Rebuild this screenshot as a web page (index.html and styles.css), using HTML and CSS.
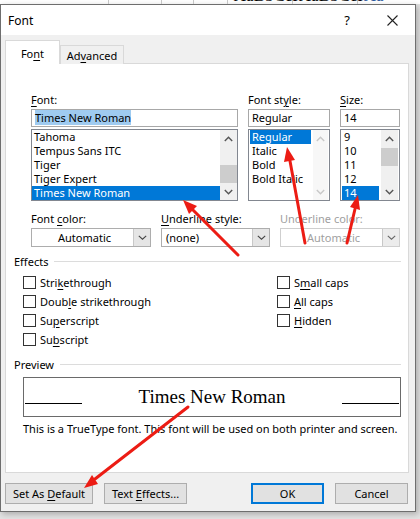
FILE: index.html
```html
<!DOCTYPE html>
<html lang="en">
<head>
    <meta charset="UTF-8">
    <title>Font</title>
    <link rel="stylesheet" href="styles.css">
</head>
<body>

    <div class="app-strip">
        <div class="cell" style="width: 112px"></div>
        <div class="cell" style="width: 54px"></div>
        <div class="cell" style="width: 32px"></div>
        <div class="cell" style="width: 34px"></div>
        <div class="cell cell-text"><span>AaBbCcI</span></div>
        <div class="cell cell-text"><span>AaBbCcI</span></div>
        <div class="cell cell-text blue"><span>Aa</span></div>
    </div>

    <div class="dialog">
        <div class="titlebar">
            <span class="title">Font</span>
            <span class="caption-btn">?</span>
            <span class="caption-btn close">
                <svg width="11" height="11" viewBox="0 0 11 11"><path d="M0.5 0.5 L10.5 10.5 M10.5 0.5 L0.5 10.5" stroke="#222" stroke-width="1.1" fill="none"/></svg>
            </span>
        </div>

        <div class="dialog-body">
            <div class="tabs">
                <div class="tab active">Fo<u>n</u>t</div>
                <div class="tab">Ad<u>v</u>anced</div>
            </div>

            <div class="panel">
                <div class="font-grid">
                    <div class="field">
                        <label><u>F</u>ont:</label>
                        <div class="textbox"><span class="sel-text">Times New Roman</span></div>
                        <div class="listbox">
                            <ul class="items">
                                <li>Tahoma</li>
                                <li>Tempus Sans ITC</li>
                                <li>Tiger</li>
                                <li>Tiger Expert</li>
                                <li class="selected">Times New Roman</li>
                            </ul>
                            <div class="scrollbar">
                                <div class="sb-btn"><svg width="9" height="6" viewBox="0 0 9 6"><path d="M0.8 5 L4.5 1.2 L8.2 5" stroke="#555" stroke-width="1.4" fill="none"/></svg></div>
                                <div class="sb-track"><div class="thumb thumb-low"></div></div>
                                <div class="sb-btn"><svg width="9" height="6" viewBox="0 0 9 6"><path d="M0.8 1 L4.5 4.8 L8.2 1" stroke="#555" stroke-width="1.4" fill="none"/></svg></div>
                            </div>
                        </div>
                    </div>

                    <div class="field">
                        <label>Font st<u>y</u>le:</label>
                        <div class="textbox">Regular</div>
                        <div class="listbox padded">
                            <ul class="items">
                                <li class="selected">Regular</li>
                                <li>Italic</li>
                                <li>Bold</li>
                                <li>Bold Italic</li>
                            </ul>
                            <div class="scrollbar disabled">
                                <div class="sb-btn"><svg width="9" height="6" viewBox="0 0 9 6"><path d="M0.8 5 L4.5 1.2 L8.2 5" stroke="#c8c8c8" stroke-width="1.4" fill="none"/></svg></div>
                                <div class="sb-track"></div>
                                <div class="sb-btn"><svg width="9" height="6" viewBox="0 0 9 6"><path d="M0.8 1 L4.5 4.8 L8.2 1" stroke="#c8c8c8" stroke-width="1.4" fill="none"/></svg></div>
                            </div>
                        </div>
                    </div>

                    <div class="field">
                        <label><u>S</u>ize:</label>
                        <div class="textbox">14</div>
                        <div class="listbox padded">
                            <ul class="items">
                                <li>9</li>
                                <li>10</li>
                                <li>11</li>
                                <li>12</li>
                                <li class="selected">14</li>
                            </ul>
                            <div class="scrollbar">
                                <div class="sb-btn"><svg width="9" height="6" viewBox="0 0 9 6"><path d="M0.8 5 L4.5 1.2 L8.2 5" stroke="#555" stroke-width="1.4" fill="none"/></svg></div>
                                <div class="sb-track"><div class="thumb"></div></div>
                                <div class="sb-btn"><svg width="9" height="6" viewBox="0 0 9 6"><path d="M0.8 1 L4.5 4.8 L8.2 1" stroke="#555" stroke-width="1.4" fill="none"/></svg></div>
                            </div>
                        </div>
                    </div>
                </div>

                <div class="combo-row">
                    <div class="combo-field wide">
                        <label>Font <u>c</u>olor:</label>
                        <div class="combo">
                            <span class="combo-value center">Automatic</span>
                            <span class="combo-btn"><svg width="9" height="5" viewBox="0 0 9 5"><path d="M0.8 0.8 L4.5 4.2 L8.2 0.8" stroke="#444" stroke-width="1.1" fill="none"/></svg></span>
                        </div>
                    </div>
                    <div class="combo-field narrow">
                        <label><u>U</u>nderline style:</label>
                        <div class="combo">
                            <span class="combo-value">(none)</span>
                            <span class="combo-btn"><svg width="9" height="5" viewBox="0 0 9 5"><path d="M0.8 0.8 L4.5 4.2 L8.2 0.8" stroke="#444" stroke-width="1.1" fill="none"/></svg></span>
                        </div>
                    </div>
                    <div class="combo-field wide disabled">
                        <label>Underline color:</label>
                        <div class="combo">
                            <span class="combo-value center">Automatic</span>
                            <span class="combo-btn"><svg width="9" height="5" viewBox="0 0 9 5"><path d="M0.8 0.8 L4.5 4.2 L8.2 0.8" stroke="#666" stroke-width="1.1" fill="none"/></svg></span>
                        </div>
                    </div>
                </div>

                <div class="group-title">Effects</div>
                <div class="effects">
                    <div class="effects-col">
                        <div class="check"><span class="box"></span><span>Stri<u>k</u>ethrough</span></div>
                        <div class="check"><span class="box"></span><span>Doub<u>l</u>e strikethrough</span></div>
                        <div class="check"><span class="box"></span><span>Su<u>p</u>erscript</span></div>
                        <div class="check"><span class="box"></span><span>Su<u>b</u>script</span></div>
                    </div>
                    <div class="effects-col">
                        <div class="check"><span class="box"></span><span>S<u>m</u>all caps</span></div>
                        <div class="check"><span class="box"></span><span><u>A</u>ll caps</span></div>
                        <div class="check"><span class="box"></span><span><u>H</u>idden</span></div>
                    </div>
                </div>

                <div class="group-title preview-title">Preview</div>
                <div class="preview-box">
                    <span class="preview-line"></span>
                    <span class="preview-text">Times New Roman</span>
                    <span class="preview-line"></span>
                </div>
                <p class="note">This is a TrueType font. This font will be used on both printer and screen.</p>
            </div>

            <div class="buttons">
                <button class="btn btn-default">Set As <u>D</u>efault</button>
                <button class="btn btn-effects">Text <u>E</u>ffects...</button>
                <button class="btn btn-ok">OK</button>
                <button class="btn btn-cancel">Cancel</button>
            </div>
        </div>
    </div>

    <svg class="annotations" width="420" height="519" viewBox="0 0 420 519">
        <g stroke="#ec1c14" stroke-width="3" stroke-linecap="round" fill="none">
            <line x1="238" y1="255" x2="193" y2="210"/>
            <line x1="305" y1="243" x2="290" y2="161"/>
            <line x1="347" y1="243" x2="355" y2="209"/>
            <line x1="188" y1="407" x2="95" y2="479"/>
        </g>
        <g fill="#ec1c14">
            <polygon points="183,200 197,206 189,214"/>
            <polygon points="287,147 295,160 284,162"/>
            <polygon points="358,195 360,210 350,207"/>
            <polygon points="84,488 98,484 92,475"/>
        </g>
    </svg>

</body>
</html>
```

FILE: styles.css
```css
body {
    margin: 0;
    width: 420px;
    height: 519px;
    overflow: hidden;
    position: relative;
    background-color: #e2e2e2;
    font-family: 'Noto Sans', sans-serif;
    font-size: 11px;
    color: #000;
}

u {
    text-decoration-thickness: 1px;
    text-underline-offset: 2px;
}

/* word window peeking above the dialog */
.app-strip {
    height: 4px;
    display: flex;
    overflow: hidden;
    background-color: #fff;
}

.app-strip .cell {
    border-right: 1px solid #c6c6c6;
    height: 4px;
}

.app-strip .cell-text {
    font-family: 'Liberation Serif', serif;
    font-size: 17px;
    line-height: 0;
    padding: 0 6px;
    width: 52px;
}

.app-strip .cell-text span {
    display: block;
    margin-top: -4px;
}

.app-strip .blue {
    color: #2b579a;
    border-right: none;
}

.dialog {
    width: 414px;
    border: 1px solid #6e6e6e;
    box-shadow: 2px 2px 6px rgba(0, 0, 0, 0.25);
    background-color: #f0f0f0;
}

.titlebar {
    height: 30px;
    display: flex;
    align-items: center;
    background-color: #fff;
    padding-left: 7px;
    font-size: 12px;
}

.title {
    flex: 1;
}

.caption-btn {
    width: 46px;
    text-align: center;
    font-size: 13px;
}

.caption-btn.close {
    width: 45px;
    display: flex;
    justify-content: center;
}

.dialog-body {
    padding: 5px 6px 7px 4px;
}

.tabs {
    display: flex;
    align-items: flex-end;
    height: 24px;
    margin-bottom: -1px;
    position: relative;
    z-index: 1;
}

.tab {
    height: 19px;
    box-sizing: border-box;
    width: 64px;
    border: 1px solid #d9d9d9;
    border-bottom: none;
    text-align: center;
    line-height: 19px;
    background-color: #f0f0f0;
}

.tab.active {
    width: 55px;
    height: 24px;
    line-height: 25px;
    background-color: #fff;
}

.panel {
    height: 410px;
    box-sizing: border-box;
    background-color: #fff;
    border: 1px solid #d9d9d9;
    padding: 28px 7px 0 8px;
}

/* font / style / size lists */
.font-grid {
    margin-left: 17px;
    display: grid;
    grid-template-columns: 207px 82px 60px;
    column-gap: 10px;
}

.field label,
.combo-field label {
    display: block;
    height: 15px;
    line-height: 15px;
    margin-bottom: 2px;
}

.textbox {
    height: 18px;
    box-sizing: border-box;
    border: 1px solid #a8a8a8;
    padding-left: 3px;
    line-height: 16px;
}

.sel-text {
    background-color: #9fcbf0;
}

.listbox {
    margin-top: 2px;
    height: 72px;
    box-sizing: border-box;
    border: 1px solid #828790;
    display: flex;
}

.listbox.padded {
    padding: 0 1px 0 1px;
}

.items {
    flex: 1;
    list-style: none;
    margin: 0;
    padding: 0;
}

.items li {
    height: 14px;
    line-height: 14px;
    padding-left: 2px;
    white-space: nowrap;
}

.items li.selected {
    background-color: #0078d7;
    color: #fff;
}

.listbox.padded .items {
    margin-right: 2px;
}

.scrollbar {
    width: 17px;
    display: flex;
    flex-direction: column;
    background-color: #f0f0f0;
}

.scrollbar.disabled {
    background-color: #f7f7f7;
    width: 15px;
}

.sb-btn {
    height: 17px;
    display: flex;
    align-items: center;
    justify-content: center;
}

.sb-track {
    flex: 1;
}

.thumb {
    height: 18px;
    margin-top: 1px;
    background-color: #cdcdcd;
}

.thumb.thumb-low {
    margin-top: 18px;
}

/* dropdowns */
.combo-row {
    margin: 10px 0 0 17px;
    display: flex;
    gap: 10px;
}

.combo-field.wide {
    width: 120px;
}

.combo-field.narrow {
    width: 109px;
}

.combo {
    height: 19px;
    box-sizing: border-box;
    border: 1px solid #adadad;
    display: flex;
    background-color: #fff;
}

.combo-value {
    flex: 1;
    line-height: 17px;
    padding-left: 4px;
}

.combo-value.center {
    text-align: center;
}

.combo-btn {
    width: 16px;
    background-color: #e5e5e5;
    border-left: 1px solid #c8c8c8;
    display: flex;
    align-items: center;
    justify-content: center;
}

.combo-field.disabled {
    color: #a0a0a0;
}

.combo-field.disabled .combo {
    border-color: #cfcfcf;
}

.combo-field.disabled .combo-btn {
    background-color: #ececec;
}

/* effects */
.group-title {
    margin-top: 7px;
    display: flex;
    align-items: center;
    gap: 6px;
    line-height: 15px;
}

.group-title::after {
    content: "";
    flex: 1;
    height: 1px;
    background-color: #dcdcdc;
}

.effects {
    margin: 4px 0 0 9px;
    display: flex;
}

.effects-col:first-child {
    width: 254px;
}

.check {
    height: 19px;
    display: flex;
    align-items: center;
    gap: 4px;
}

.check .box {
    width: 13px;
    height: 13px;
    box-sizing: border-box;
    border: 1px solid #333;
    background-color: #fff;
}

/* preview */
.preview-title {
    margin-top: 8px;
}

.preview-box {
    margin: 5px 0 0 9px;
    height: 40px;
    box-sizing: border-box;
    border: 1px solid #6a6a6a;
    display: flex;
    padding: 0 1px;
}

.preview-line {
    width: 57px;
    height: 1px;
    margin-top: 25px;
    background-color: #000;
}

.preview-text {
    flex: 1;
    text-align: center;
    font-family: 'Liberation Serif', serif;
    font-size: 19px;
    line-height: 38px;
}

.note {
    margin: 4px 0 0 9px;
    line-height: 15px;
    white-space: nowrap;
}

/* bottom buttons */
.buttons {
    display: flex;
    padding-top: 10px;
    padding-right: 1px;
}

.btn {
    height: 21px;
    box-sizing: border-box;
    border: 1px solid #adadad;
    background-color: #e1e1e1;
    font-family: inherit;
    font-size: 11px;
    padding: 0;
    color: #000;
}

.btn-default {
    width: 88px;
}

.btn-effects {
    width: 83px;
    margin-left: 11px;
}

.btn-ok {
    width: 73px;
    margin-left: auto;
    border: 2px solid #0078d7;
}

.btn-cancel {
    width: 73px;
    margin-left: 11px;
}

.annotations {
    position: absolute;
    top: 0;
    left: 0;
    pointer-events: none;
}
```
